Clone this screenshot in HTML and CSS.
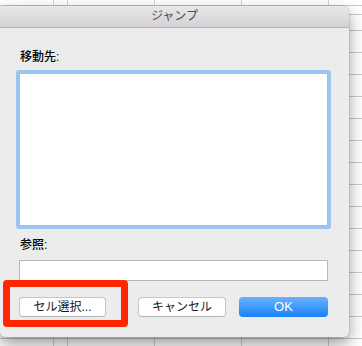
FILE: index.html
```html
<!DOCTYPE html>
<html lang="ja">
<head>
  <meta charset="UTF-8" />
  <meta name="viewport" content="width=device-width, initial-scale=1.0"/>
  <title>ジャンプ</title>
  <link rel="stylesheet" href="styles.css">
</head>
<body>

  <div class="sheet">
    <div class="dialog">
      <div class="titlebar">ジャンプ</div>

      <div class="dialog-body">
        <label class="field-label">移動先:</label>
        <div class="goto-list"></div>

        <label class="field-label ref-label">参照:</label>
        <input type="text" class="ref-input">

        <div class="button-row">
          <button class="btn btn-select">セル選択...</button>
          <div class="button-group">
            <button class="btn btn-cancel">キャンセル</button>
            <button class="btn btn-primary">OK</button>
          </div>
        </div>
      </div>

      <!-- red annotation around the select button -->
      <div class="callout"></div>
    </div>
  </div>

</body>
</html>
```

FILE: styles.css
```css
html, body {
  margin: 0;
  padding: 0;
  font-family: "Liberation Sans", "Noto Sans CJK JP", sans-serif;
  overflow: hidden;
}

.sheet {
  width: 362px;
  height: 346px;
  box-sizing: border-box;
  padding-top: 6px;
  background-color: #fff;
  background-image:
    linear-gradient(#c9c9c9, #c9c9c9),
    repeating-linear-gradient(to bottom, #c9c9c9 0 1px, transparent 1px 22px),
    repeating-linear-gradient(to right, #d0d0d0 0 1px, transparent 1px 87px);
  background-size: 100% 1px, 100% 100%, 100% 100%;
  background-position: 0 5px, 0 30px, 67px 0;
  background-repeat: no-repeat, repeat-y, repeat-x;
}

.dialog {
  position: relative;
  width: 349px;
  background: #ececec;
  border-radius: 5px;
  box-shadow: 0 7px 16px rgba(0, 0, 0, 0.4), 0 0 0 0.5px rgba(0, 0, 0, 0.15);
}

.titlebar {
  height: 21px;
  line-height: 21px;
  text-align: center;
  font-size: 12px;
  color: #4b4b4b;
  background: linear-gradient(to bottom, #e9e7e9, #d4d2d4);
  border-bottom: 1px solid #b3b3b3;
  border-radius: 5px 5px 0 0;
}

.dialog-body {
  padding: 21px 21px 20px 19px;
}

.field-label {
  display: block;
  font-size: 12px;
  line-height: 16px;
  padding-left: 1px;
  margin-bottom: 8px;
  color: #000;
  font-weight: 500;
}

.goto-list {
  height: 153px;
  box-sizing: border-box;
  background: #fff;
  border: 1px solid #b9b9b9;
  border-radius: 1px;
  box-shadow: 0 0 0 3px #9cc5f1;
}

.ref-label {
  margin-top: 11px;
  margin-bottom: 7px;
}

.ref-input {
  display: block;
  width: 100%;
  height: 21px;
  box-sizing: border-box;
  margin: 0;
  border: 1px solid #b8b8b8;
  background: #fff;
  outline: none;
}

.button-row {
  display: flex;
  justify-content: space-between;
  margin-top: 16px;
}

.button-group {
  display: flex;
  gap: 13px;
}

.btn {
  height: 20px;
  padding: 0;
  box-sizing: border-box;
  font-family: "Liberation Sans", "Noto Sans CJK JP", sans-serif;
  font-size: 12px;
  line-height: 18px;
  color: #1a1a1a;
  background: #fff;
  border: 1px solid #c6c6c6;
  border-bottom-color: #b3b3b3;
  border-radius: 4px;
  cursor: pointer;
}

.btn-select {
  width: 87px;
}

.btn-cancel {
  width: 88px;
}

.btn-primary {
  width: 89px;
  font-size: 13px;
  color: #fff;
  border: none;
  background: linear-gradient(to bottom, #6bb1fb, #1882fc);
}

.callout {
  position: absolute;
  left: 3px;
  top: 274px;
  width: 125px;
  height: 47px;
  box-sizing: border-box;
  border: 7px solid #ff2600;
  border-radius: 4px;
}
```
